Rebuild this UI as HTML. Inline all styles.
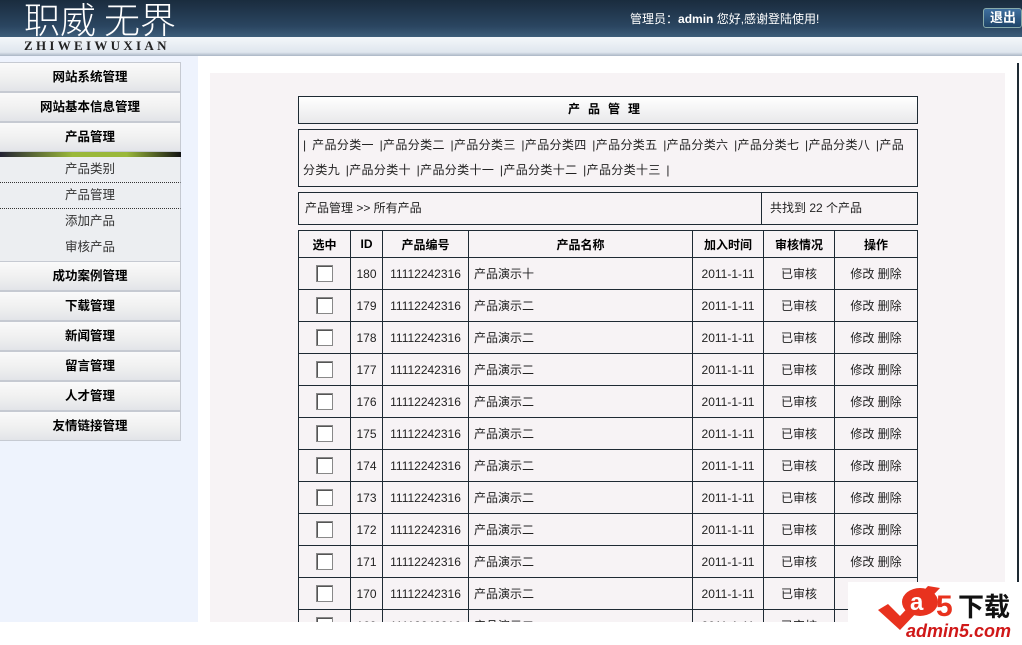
<!DOCTYPE html>
<html><head><meta charset="utf-8"><style>
*{margin:0;padding:0;box-sizing:border-box}
body{width:1022px;height:645px;overflow:hidden;background:#fff;font-family:"Liberation Sans","Noto Sans CJK SC","WenQuanYi Zen Hei",sans-serif;font-size:12px;color:#222;position:relative}
.hd{position:absolute;left:0;top:0;width:1022px;height:37px;background:linear-gradient(#1a2c3e,#2a4560 70%,#3d5d7a);overflow:hidden}
.band{position:absolute;left:0;top:37px;width:1022px;height:19px;background:linear-gradient(#f4f7fa,#dfe6ee 80%,#aab6c4)}
.logo{position:absolute;left:24px;top:-8px;color:#fff;font-size:36px;letter-spacing:0px;font-family:"Noto Sans CJK SC",sans-serif;font-weight:300;white-space:nowrap}
.en{position:absolute;left:24px;top:1px;font-family:"Liberation Serif",serif;font-weight:bold;font-size:13px;letter-spacing:3.3px;color:#222}
.wel{position:absolute;left:630px;top:10px;color:#fff;font-size:12px}
.out{position:absolute;left:983px;top:8px;width:39px;height:20px;border:1px solid #8aa;border-radius:3px;background:linear-gradient(#3f6f9f,#1f4468);color:#fff;font-weight:bold;font-size:13px;padding-left:6px;line-height:18px}
.side{position:absolute;left:0;top:56px;width:198px;height:566px;background:#eef3fd}
.mi{position:absolute;left:0;width:181px;height:30px;background:linear-gradient(#fafafa,#f1f1f1 50%,#e2e4e8);border:1px solid #c6cad2;border-left:none;text-align:center;font-weight:bold;font-size:12.5px;line-height:28px;color:#000}
.si{position:absolute;left:0;width:181px;height:26px;background:#eceef1;border-right:1px solid #c6cad2;text-align:center;line-height:25px;font-size:12.5px;color:#333}
.main{position:absolute;left:198px;top:56px;width:820px;height:566px;background:#fff}
.panel{position:absolute;left:210px;top:73px;width:795px;height:549px;background:#f7f3f5}
.box{position:absolute;left:298px;width:620px;border:1px solid #1e2a33;background:#f7f3f5}
table{position:absolute;left:298px;top:230px;width:619px;border-collapse:collapse;table-layout:fixed;background:#f7f3f5}
td,th{border:1px solid #1e2a33;text-align:center;font-size:12px;white-space:nowrap;overflow:hidden}
th{height:27px;font-weight:bold;color:#000}
td{height:32px;color:#222}
.cb{display:inline-block;width:17px;height:17px;border:1px solid #888;background:#fff;box-shadow:inset 1px 1px 0 #555;vertical-align:middle}
</style></head><body>
<div class="hd"><div class="logo">职威 无界</div><div class="wel">管理员：<b>admin</b> 您好,感谢登陆使用!</div><div class="out">退出</div></div>
<div class="band"><div class="en">ZHIWEIWUXIAN</div></div>
<div class="side">
<div class="mi" style="top:6px">网站系统管理</div>
<div class="mi" style="top:36px">网站基本信息管理</div>
<div class="mi" style="top:66px">产品管理</div>
<div style="position:absolute;left:0;top:96px;width:181px;height:5px;background:linear-gradient(90deg,#223,#9ab83a 40%,#9ab83a 70%,#111)"></div>
<div class="si" style="top:101px;border-bottom:1px dotted #333">产品类别</div>
<div class="si" style="top:127px;border-bottom:1px dotted #333">产品管理</div>
<div class="si" style="top:153px">添加产品</div>
<div class="si" style="top:179px">审核产品</div>
<div class="mi" style="top:205px">成功案例管理</div>
<div class="mi" style="top:235px">下载管理</div>
<div class="mi" style="top:265px">新闻管理</div>
<div class="mi" style="top:295px">留言管理</div>
<div class="mi" style="top:325px">人才管理</div>
<div class="mi" style="top:355px">友情链接管理</div>
</div>
<div class="main"></div>
<div class="panel"></div>
<div style="position:absolute;left:1017px;top:63px;width:2px;height:559px;background:#1e2a33"></div>
<div class="box" style="top:96px;height:28px;background:linear-gradient(#fff,#e8e8ea);text-align:center;font-weight:bold;letter-spacing:8px;line-height:25px;color:#000">产品管理</div>
<div class="box" style="top:129px;height:58px;padding:3px 4px;line-height:25px;font-size:12px;color:#222;letter-spacing:0.35px;word-spacing:2px">| 产品分类一 |产品分类二 |产品分类三 |产品分类四 |产品分类五 |产品分类六 |产品分类七 |产品分类八 |产品分类九 |产品分类十 |产品分类十一 |产品分类十二 |产品分类十三 |</div>
<div class="box" style="top:192px;height:33px;line-height:31px;padding-left:6px">产品管理 &gt;&gt; 所有产品<div style="position:absolute;left:462px;top:0;height:31px;border-left:1px solid #1e2a33;padding-left:8px">共找到 22 个产品</div></div>
<div style="position:absolute;left:0;top:0;width:1022px;height:622px;overflow:hidden">
<table>
<colgroup><col style="width:52px"><col style="width:32px"><col style="width:86px"><col style="width:224px"><col style="width:71px"><col style="width:71px"><col style="width:83px"></colgroup>
<tr><th>选中</th><th>ID</th><th>产品编号</th><th>产品名称</th><th>加入时间</th><th>审核情况</th><th>操作</th></tr>
<tr><td><span class="cb"></span></td><td>180</td><td>11112242316</td><td style="text-align:left;padding-left:5px">产品演示十</td><td>2011-1-11</td><td>已审核</td><td>修改 删除</td></tr>
<tr><td><span class="cb"></span></td><td>179</td><td>11112242316</td><td style="text-align:left;padding-left:5px">产品演示二</td><td>2011-1-11</td><td>已审核</td><td>修改 删除</td></tr>
<tr><td><span class="cb"></span></td><td>178</td><td>11112242316</td><td style="text-align:left;padding-left:5px">产品演示二</td><td>2011-1-11</td><td>已审核</td><td>修改 删除</td></tr>
<tr><td><span class="cb"></span></td><td>177</td><td>11112242316</td><td style="text-align:left;padding-left:5px">产品演示二</td><td>2011-1-11</td><td>已审核</td><td>修改 删除</td></tr>
<tr><td><span class="cb"></span></td><td>176</td><td>11112242316</td><td style="text-align:left;padding-left:5px">产品演示二</td><td>2011-1-11</td><td>已审核</td><td>修改 删除</td></tr>
<tr><td><span class="cb"></span></td><td>175</td><td>11112242316</td><td style="text-align:left;padding-left:5px">产品演示二</td><td>2011-1-11</td><td>已审核</td><td>修改 删除</td></tr>
<tr><td><span class="cb"></span></td><td>174</td><td>11112242316</td><td style="text-align:left;padding-left:5px">产品演示二</td><td>2011-1-11</td><td>已审核</td><td>修改 删除</td></tr>
<tr><td><span class="cb"></span></td><td>173</td><td>11112242316</td><td style="text-align:left;padding-left:5px">产品演示二</td><td>2011-1-11</td><td>已审核</td><td>修改 删除</td></tr>
<tr><td><span class="cb"></span></td><td>172</td><td>11112242316</td><td style="text-align:left;padding-left:5px">产品演示二</td><td>2011-1-11</td><td>已审核</td><td>修改 删除</td></tr>
<tr><td><span class="cb"></span></td><td>171</td><td>11112242316</td><td style="text-align:left;padding-left:5px">产品演示二</td><td>2011-1-11</td><td>已审核</td><td>修改 删除</td></tr>
<tr><td><span class="cb"></span></td><td>170</td><td>11112242316</td><td style="text-align:left;padding-left:5px">产品演示二</td><td>2011-1-11</td><td>已审核</td><td>修改 删除</td></tr>
<tr><td><span class="cb"></span></td><td>169</td><td>11112242316</td><td style="text-align:left;padding-left:5px">产品演示二</td><td>2011-1-11</td><td>已审核</td><td>修改 删除</td></tr>
</table>
</div>
<div style="position:absolute;left:848px;top:582px;width:174px;height:63px;background:#fff"></div>
<svg style="position:absolute;left:848px;top:580px" width="174" height="65">
<path d="M30 30 L52 50 L92 8 L80 6 L52 36 L40 24 Z" fill="#e8321e"/>
<ellipse cx="72" cy="22" rx="18" ry="14" fill="#e8321e"/>
<text x="62" y="30" font-family="Liberation Sans" font-weight="bold" font-size="24" fill="#fff">a</text>
<text x="88" y="36" font-family="Liberation Sans" font-weight="bold" font-size="30" fill="#e8321e">5</text>
<text x="110" y="36" font-family="Noto Sans CJK SC" font-weight="bold" font-size="26" fill="#111">下载</text>
<text x="58" y="57" font-family="Liberation Sans" font-weight="bold" font-style="italic" font-size="18" fill="#d01818">admin5.com</text>
</svg>
</body></html>
